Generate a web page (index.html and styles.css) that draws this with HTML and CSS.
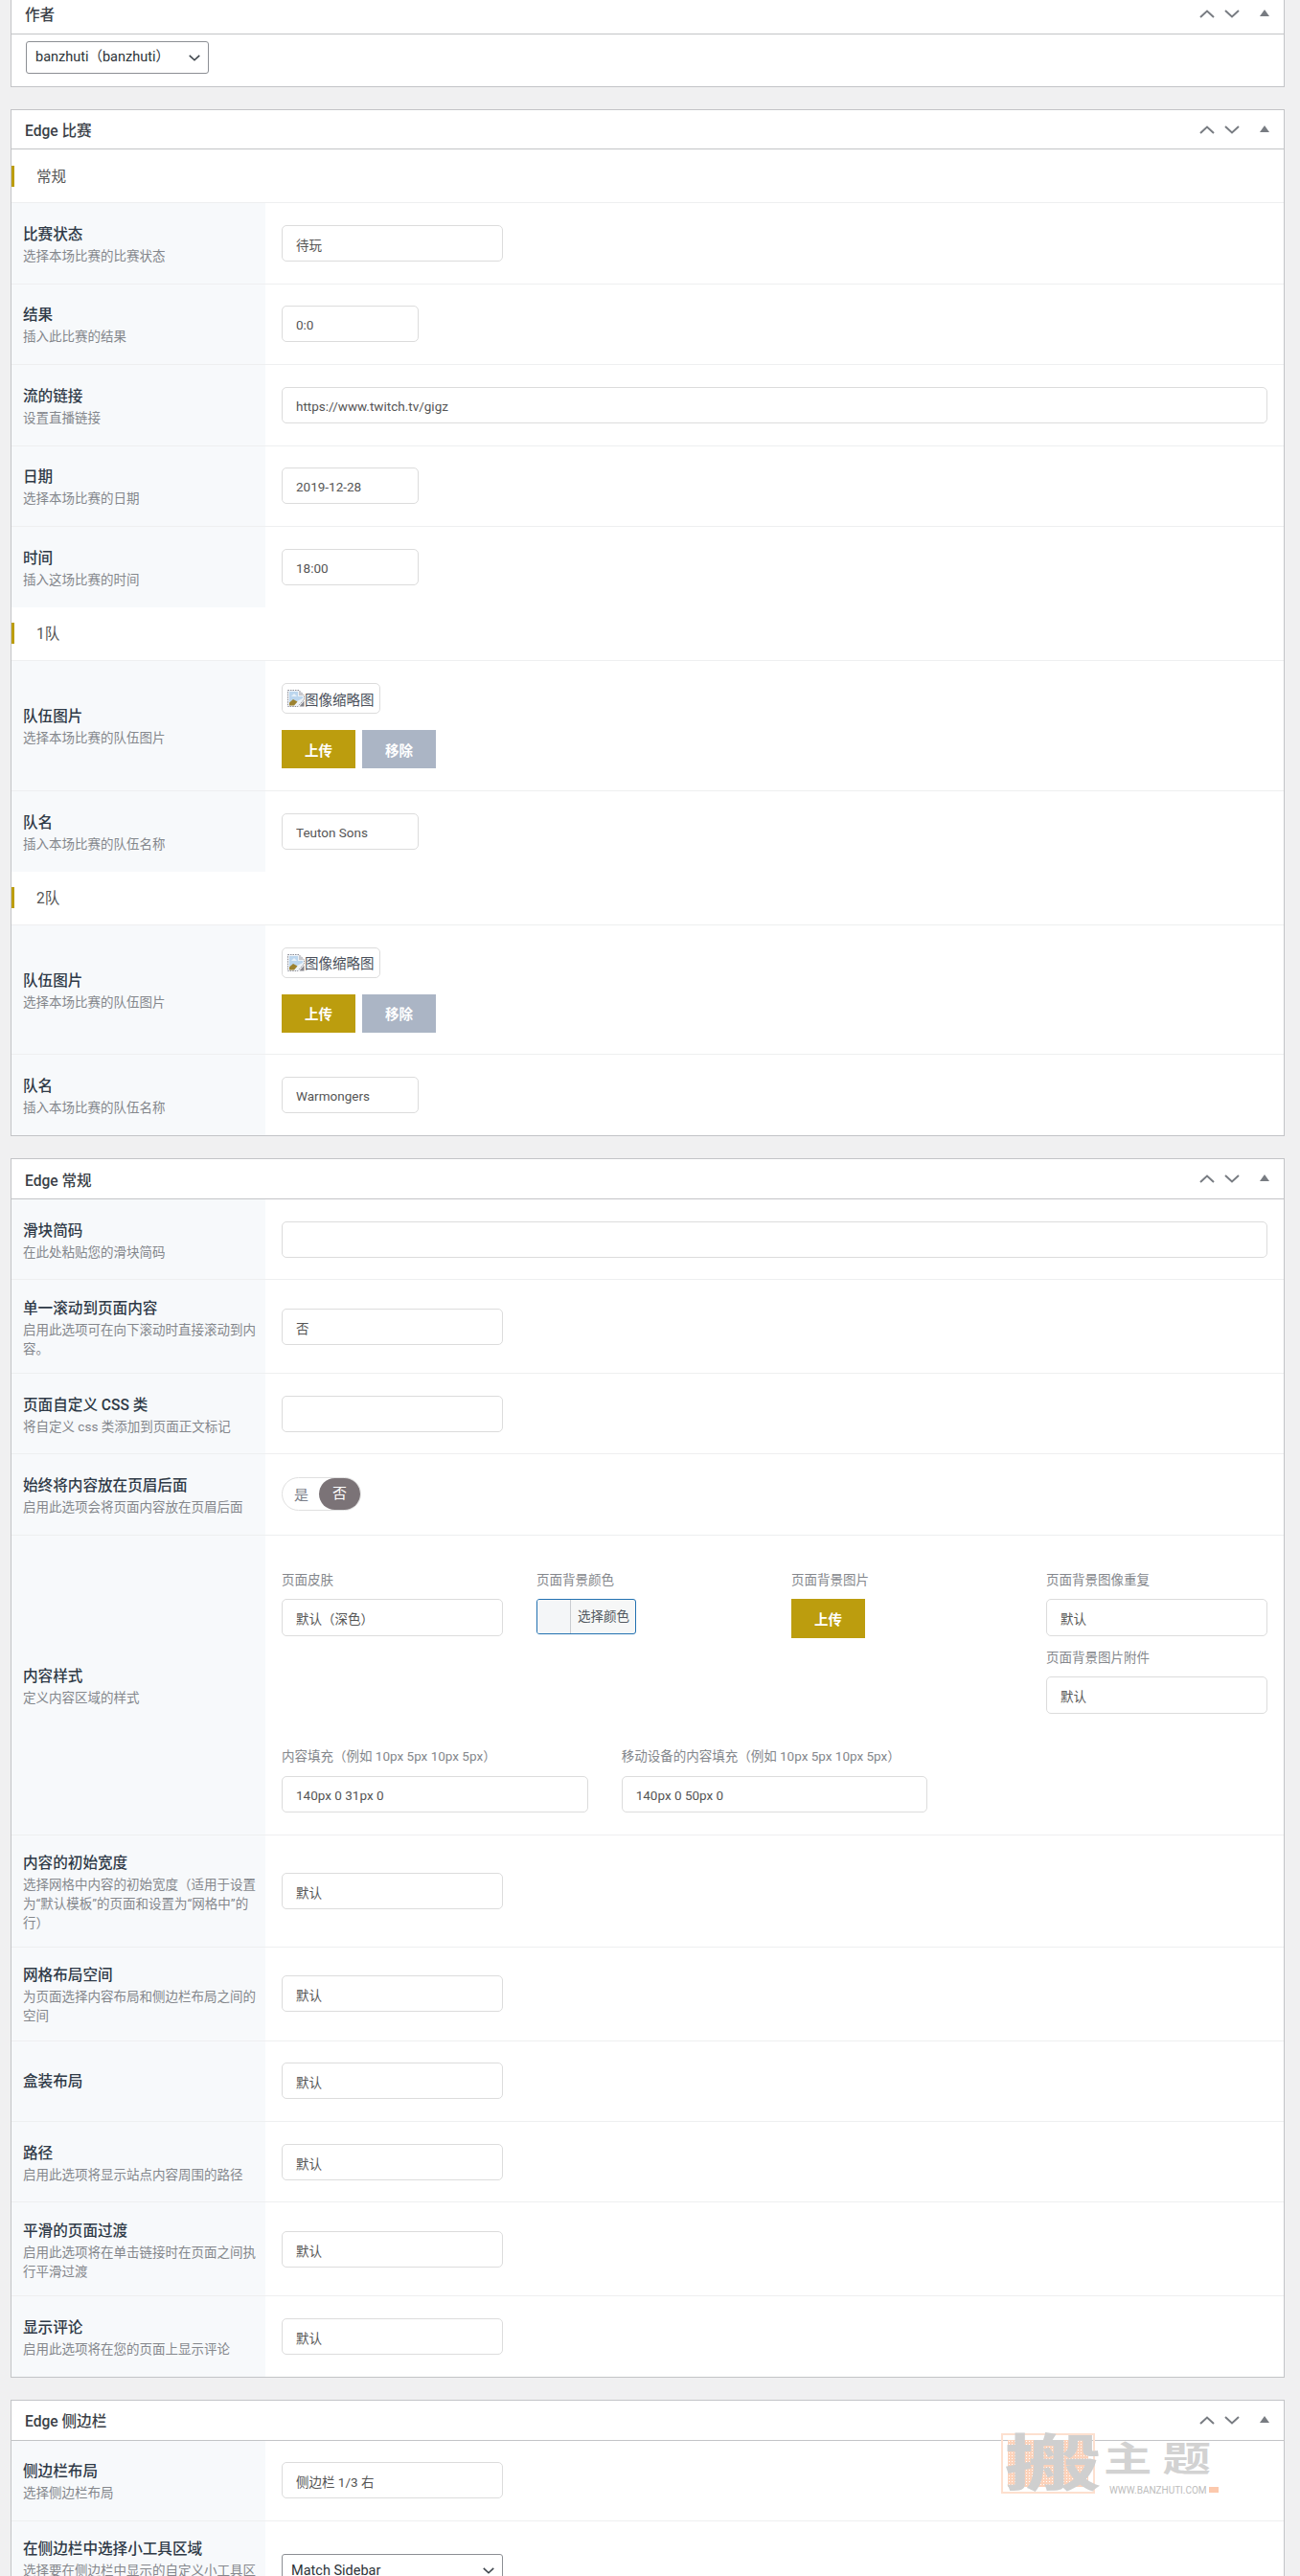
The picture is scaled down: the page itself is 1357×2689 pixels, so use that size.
FILE: index.html
```html
<!DOCTYPE html>
<html lang="zh-CN">
<head>
    <meta charset="UTF-8">
    <meta name="viewport" content="width=device-width, initial-scale=1.0">
    <title>编辑比赛</title>
    <link rel="stylesheet" href="styles.css">
</head>
<body>

<svg class="icon-defs" aria-hidden="true">
    <symbol id="chev-up" viewBox="0 0 16 9"><path d="M1 8 L8 1.5 L15 8" fill="none" stroke="currentColor" stroke-width="2"/></symbol>
    <symbol id="chev-down" viewBox="0 0 16 9"><path d="M1 1 L8 7.5 L15 1" fill="none" stroke="currentColor" stroke-width="2"/></symbol>
    <symbol id="tri-up" viewBox="0 0 10 7"><path d="M5 0 L10 7 L0 7 Z" fill="currentColor"/></symbol>
    <symbol id="broken-img" viewBox="0 0 18 18">
        <path d="M0.5 0.5 H12 L17.5 6 V10 L11 17.5 H0.5 Z" fill="#eef3f8" stroke="#8f8f98" stroke-dasharray="1.5 1"/>
        <path d="M12 0.5 V6 H17.5 Z" fill="#c8c8cc"/>
        <path d="M2 2 H11 V7 H16 V9 L10 12 L2 13 Z" fill="#bcd6ee"/>
        <path d="M4 7 L7 4 L10 7 Z" fill="#e8f1f9"/>
        <path d="M2 16.5 V13.5 L6 10 L10.5 12.5 L7 16.5 Z" fill="#9c8230"/>
        <path d="M12.5 17.5 L17.5 11.5 V17.5 Z" fill="#85858d"/>
    </symbol>
</svg>

<div id="page">

    <div class="postbox first-box">
        <div class="box-head">
            <h2>作者</h2>
            <div class="box-controls">
                <svg class="ctl-chev"><use href="#chev-up"/></svg>
                <svg class="ctl-chev"><use href="#chev-down"/></svg>
                <svg class="ctl-tri"><use href="#tri-up"/></svg>
            </div>
        </div>
        <div class="author-body">
            <div class="select-wrap author-select">
                <select class="wp-select"><option>banzhuti（banzhuti）</option></select>
                <svg class="select-arrow"><use href="#chev-down"/></svg>
            </div>
        </div>
    </div>

    <div class="postbox">
        <div class="box-head">
            <h2>Edge 比赛</h2>
            <div class="box-controls">
                <svg class="ctl-chev"><use href="#chev-up"/></svg>
                <svg class="ctl-chev"><use href="#chev-down"/></svg>
                <svg class="ctl-tri"><use href="#tri-up"/></svg>
            </div>
        </div>

        <div class="section-title"><span>常规</span></div>
        <div class="row">
            <div class="row-label"><h3>比赛状态</h3><p>选择本场比赛的比赛状态</p></div>
            <div class="row-field"><input class="field field-md" value="待玩" readonly></div>
        </div>
        <div class="row">
            <div class="row-label"><h3>结果</h3><p>插入此比赛的结果</p></div>
            <div class="row-field"><input class="field field-sm" value="0:0" readonly></div>
        </div>
        <div class="row">
            <div class="row-label"><h3>流的链接</h3><p>设置直播链接</p></div>
            <div class="row-field"><input class="field" value="https://www.twitch.tv/gigz" readonly></div>
        </div>
        <div class="row">
            <div class="row-label"><h3>日期</h3><p>选择本场比赛的日期</p></div>
            <div class="row-field"><input class="field field-sm" value="2019-12-28" readonly></div>
        </div>
        <div class="row row-last">
            <div class="row-label"><h3>时间</h3><p>插入这场比赛的时间</p></div>
            <div class="row-field"><input class="field field-sm" value="18:00" readonly></div>
        </div>

        <div class="section-title"><span>1队</span></div>
        <div class="row row-image">
            <div class="row-label"><h3>队伍图片</h3><p>选择本场比赛的队伍图片</p></div>
            <div class="row-field field-stack">
                <div class="thumb"><svg class="broken"><use href="#broken-img"/></svg>图像缩略图</div>
                <div class="btn-row">
                    <button class="btn btn-gold">上传</button>
                    <button class="btn btn-grey">移除</button>
                </div>
            </div>
        </div>
        <div class="row row-last">
            <div class="row-label"><h3>队名</h3><p>插入本场比赛的队伍名称</p></div>
            <div class="row-field"><input class="field field-sm" value="Teuton Sons" readonly></div>
        </div>

        <div class="section-title"><span>2队</span></div>
        <div class="row row-image">
            <div class="row-label"><h3>队伍图片</h3><p>选择本场比赛的队伍图片</p></div>
            <div class="row-field field-stack">
                <div class="thumb"><svg class="broken"><use href="#broken-img"/></svg>图像缩略图</div>
                <div class="btn-row">
                    <button class="btn btn-gold">上传</button>
                    <button class="btn btn-grey">移除</button>
                </div>
            </div>
        </div>
        <div class="row row-last">
            <div class="row-label"><h3>队名</h3><p>插入本场比赛的队伍名称</p></div>
            <div class="row-field"><input class="field field-sm" value="Warmongers" readonly></div>
        </div>
    </div>

    <div class="postbox">
        <div class="box-head">
            <h2>Edge 常规</h2>
            <div class="box-controls">
                <svg class="ctl-chev"><use href="#chev-up"/></svg>
                <svg class="ctl-chev"><use href="#chev-down"/></svg>
                <svg class="ctl-tri"><use href="#tri-up"/></svg>
            </div>
        </div>

        <div class="row">
            <div class="row-label"><h3>滑块简码</h3><p>在此处粘贴您的滑块简码</p></div>
            <div class="row-field"><input class="field" readonly></div>
        </div>
        <div class="row">
            <div class="row-label"><h3>单一滚动到页面内容</h3><p>启用此选项可在向下滚动时直接滚动到内容。</p></div>
            <div class="row-field"><input class="field field-md" value="否" readonly></div>
        </div>
        <div class="row">
            <div class="row-label"><h3>页面自定义 CSS 类</h3><p>将自定义 css 类添加到页面正文标记</p></div>
            <div class="row-field"><input class="field field-md" readonly></div>
        </div>
        <div class="row">
            <div class="row-label"><h3>始终将内容放在页眉后面</h3><p>启用此选项会将页面内容放在页眉后面</p></div>
            <div class="row-field">
                <div class="toggle"><span class="toggle-off">是</span><span class="toggle-on">否</span></div>
            </div>
        </div>
        <div class="row">
            <div class="row-label"><h3>内容样式</h3><p>定义内容区域的样式</p></div>
            <div class="row-field style-field">
                <div class="style-grid">
                    <div>
                        <label class="mini-label">页面皮肤</label>
                        <input class="field" value="默认（深色）" readonly>
                    </div>
                    <div>
                        <label class="mini-label">页面背景颜色</label>
                        <div class="color-pick"><span class="color-swatch"></span><span class="color-text">选择颜色</span></div>
                    </div>
                    <div>
                        <label class="mini-label">页面背景图片</label>
                        <button class="btn btn-gold btn-upload">上传</button>
                    </div>
                    <div>
                        <label class="mini-label">页面背景图像重复</label>
                        <input class="field" value="默认" readonly>
                        <label class="mini-label second-label">页面背景图片附件</label>
                        <input class="field" value="默认" readonly>
                    </div>
                </div>
                <div class="padding-grid">
                    <div>
                        <label class="mini-label">内容填充（例如 10px 5px 10px 5px）</label>
                        <input class="field" value="140px 0 31px 0" readonly>
                    </div>
                    <div>
                        <label class="mini-label">移动设备的内容填充（例如 10px 5px 10px 5px）</label>
                        <input class="field" value="140px 0 50px 0" readonly>
                    </div>
                </div>
            </div>
        </div>
        <div class="row">
            <div class="row-label"><h3>内容的初始宽度</h3><p>选择网格中内容的初始宽度（适用于设置为“默认模板”的页面和设置为“网格中”的行）</p></div>
            <div class="row-field"><input class="field field-md" value="默认" readonly></div>
        </div>
        <div class="row">
            <div class="row-label"><h3>网格布局空间</h3><p>为页面选择内容布局和侧边栏布局之间的空间</p></div>
            <div class="row-field"><input class="field field-md" value="默认" readonly></div>
        </div>
        <div class="row">
            <div class="row-label"><h3>盒装布局</h3></div>
            <div class="row-field"><input class="field field-md" value="默认" readonly></div>
        </div>
        <div class="row">
            <div class="row-label"><h3>路径</h3><p>启用此选项将显示站点内容周围的路径</p></div>
            <div class="row-field"><input class="field field-md" value="默认" readonly></div>
        </div>
        <div class="row">
            <div class="row-label"><h3>平滑的页面过渡</h3><p>启用此选项将在单击链接时在页面之间执行平滑过渡</p></div>
            <div class="row-field"><input class="field field-md" value="默认" readonly></div>
        </div>
        <div class="row row-last">
            <div class="row-label"><h3>显示评论</h3><p>启用此选项将在您的页面上显示评论</p></div>
            <div class="row-field"><input class="field field-md" value="默认" readonly></div>
        </div>
    </div>

    <div class="postbox">
        <div class="box-head">
            <h2>Edge 侧边栏</h2>
            <div class="box-controls">
                <svg class="ctl-chev"><use href="#chev-up"/></svg>
                <svg class="ctl-chev"><use href="#chev-down"/></svg>
                <svg class="ctl-tri"><use href="#tri-up"/></svg>
            </div>
        </div>
        <div class="row">
            <div class="row-label"><h3>侧边栏布局</h3><p>选择侧边栏布局</p></div>
            <div class="row-field"><input class="field field-md" value="侧边栏 1/3 右" readonly></div>
        </div>
        <div class="row">
            <div class="row-label"><h3>在侧边栏中选择小工具区域</h3><p>选择要在侧边栏中显示的自定义小工具区域</p></div>
            <div class="row-field">
                <div class="select-wrap sidebar-select">
                    <select class="wp-select"><option>Match Sidebar</option></select>
                    <svg class="select-arrow"><use href="#chev-down"/></svg>
                </div>
            </div>
        </div>
    </div>

    <!-- site watermark, sits on top of the last box -->
    <div class="watermark">
        <div class="wm-stamp"><div class="wm-fill"></div><span class="wm-glyph">搬</span></div>
        <span class="wm-title">主题</span>
        <span class="wm-url">WWW.BANZHUTI.COM</span>
        <span class="wm-dot"></span>
    </div>

</div>

</body>
</html>
```

FILE: styles.css
```css
:root {
    --page-background: #f0f0f1;
    --box-border: #c3c4c7;
    --row-line: #eeeff0;
    --label-background: #f7f9fb;
    --title-text: #2f3a47;
    --desc-text: #84878c;
    --gold: #bc9d0e;
    --grey-button: #abb5c5;
}

* {
    box-sizing: border-box;
}

html, body {
    height: 2689px;
    margin: 0;
    overflow: hidden;
}

body {
    background-color: var(--page-background);
    font-family: Roboto, "Noto Sans CJK SC", sans-serif;
    font-size: 13.5px;
    color: #444;
}

.icon-defs {
    display: none;
}

#page {
    position: relative;
    padding: 0 16px 0 11px;
}

.postbox {
    background-color: #fff;
    border: 1px solid var(--box-border);
    margin-bottom: 23px;
}

.first-box {
    margin-top: -7px;
}

.box-head {
    display: flex;
    align-items: center;
    justify-content: space-between;
    height: 41.7px;
    padding-left: 14px;
    border-bottom: 1px solid var(--box-border);
}

.box-head h2 {
    margin: 0;
    font-size: 15.6px;
    font-weight: 500;
    color: #3a3f47;
}

.box-controls {
    display: flex;
    align-items: center;
    padding-right: 15px;
    color: #787c82;
}

.ctl-chev {
    width: 16px;
    height: 9px;
    margin-right: 10px;
}

.ctl-tri {
    width: 10px;
    height: 7px;
    margin: -2px 0 0 11px;
}

.author-body {
    padding: 7px 15px 13px;
}

.select-wrap {
    position: relative;
    display: block;
}

.author-select {
    width: 191px;
}

.sidebar-select {
    width: 231px;
    margin-top: 6px;
}

.wp-select {
    appearance: none;
    width: 100%;
    height: 34px;
    padding: 0 24px 0 9px;
    background-color: #fff;
    border: 1px solid #8c8f94;
    border-radius: 3px;
    font-family: inherit;
    font-size: 14.5px;
    color: #2c3338;
}

.select-arrow {
    position: absolute;
    right: 9px;
    top: 14px;
    width: 12px;
    height: 7px;
    color: #3c434a;
}

.section-title {
    display: flex;
    align-items: center;
    height: 56px;
    border-bottom: 1px solid var(--row-line);
    font-size: 15.6px;
    color: #555;
}

.section-title span {
    height: 22px;
    line-height: 24px;
    padding-left: 23px;
    border-left: 3px solid var(--gold);
}

.row {
    display: flex;
    min-height: 84.4px;
    border-bottom: 1px solid var(--row-line);
}

.row-last {
    min-height: 84px;
    border-bottom: 0;
}

.row-label {
    flex: 0 0 265px;
    display: flex;
    flex-direction: column;
    justify-content: center;
    padding: 17.25px 10px 15.25px 12px;
    background-color: var(--label-background);
}

.row-label h3 {
    margin: 0;
    font-size: 15.6px;
    font-weight: 500;
    line-height: 24px;
    color: var(--title-text);
}

.row-label p {
    margin: 0;
    font-size: 13.5px;
    line-height: 20px;
    color: var(--desc-text);
}

.row-field {
    flex: 1;
    min-width: 0;
    display: flex;
    align-items: center;
    padding: 0 17px;
}

.field {
    display: block;
    width: 100%;
    height: 38px;
    padding: 2px 14px 0;
    background-color: #fff;
    border: 1px solid #dcdcdc;
    border-radius: 5px;
    font-family: inherit;
    font-size: 13.5px;
    color: #555;
    outline: none;
}

.field-md {
    width: 231px;
}

.field-sm {
    width: 143px;
}

.row-image {
    min-height: 135.7px;
}

.field-stack {
    flex-direction: column;
    align-items: flex-start;
    justify-content: center;
    padding-top: 1px;
}

.thumb {
    display: flex;
    align-items: center;
    width: 103px;
    height: 32px;
    padding: 0 5px;
    margin-bottom: 17px;
    background-color: #fff;
    border: 1px solid #dcdcdc;
    border-radius: 5px;
    font-size: 14.5px;
    white-space: nowrap;
    color: #4a4f5a;
}

.broken {
    flex: none;
    width: 18px;
    height: 18px;
}

.btn-row {
    display: flex;
    gap: 7px;
}

.btn {
    width: 77px;
    height: 40px;
    border: 0;
    font-family: inherit;
    font-size: 14.5px;
    font-weight: 700;
    color: #fff;
}

.btn-gold {
    background-color: var(--gold);
}

.btn-grey {
    background-color: var(--grey-button);
}

.btn-upload {
    display: block;
    height: 41px;
}

.toggle {
    display: flex;
    align-items: center;
    justify-content: space-between;
    width: 83px;
    height: 35px;
    padding-left: 12px;
    border: 1px solid #e0e0e0;
    border-radius: 18px;
    font-size: 15px;
    color: #7b7f8a;
}

.toggle-on {
    width: 43px;
    height: 33px;
    line-height: 33px;
    text-align: center;
    background-color: #7b7377;
    border-radius: 17px;
    color: #fff;
}

.style-field {
    display: block;
    padding: 36px 17px 23px;
}

.style-grid {
    display: grid;
    grid-template-columns: repeat(4, 1fr);
    column-gap: 35px;
}

.style-grid .field {
    height: 39px;
}

.padding-grid {
    display: grid;
    grid-template-columns: repeat(3, 1fr);
    column-gap: 35px;
    margin-top: 34px;
}

.padding-grid .mini-label {
    margin-bottom: 11px;
}

.mini-label {
    display: block;
    height: 20px;
    line-height: 20px;
    margin-bottom: 10px;
    font-size: 13.5px;
    white-space: nowrap;
    color: #84878c;
}

.second-label {
    margin-top: 12px;
}

.color-pick {
    display: flex;
    width: 104px;
    height: 37px;
    background-color: #f6f7f7;
    border: 1px solid #2271b1;
    border-radius: 3px;
    overflow: hidden;
}

.color-swatch {
    width: 35px;
    background-color: #f4f6f8;
    border-right: 1px solid #c9ccd0;
}

.color-text {
    padding-left: 7px;
    line-height: 35px;
    font-size: 13.5px;
    white-space: nowrap;
    color: #50575e;
}

.watermark {
    position: absolute;
    left: 1045px;
    top: 2547px;
    width: 230px;
    height: 68px;
    pointer-events: none;
}

.wm-stamp {
    position: absolute;
    left: 0;
    top: 0;
    width: 98px;
    height: 63px;
    padding: 5px;
    border: 2px solid #fde0cf;
}

.wm-fill {
    height: 100%;
    background-color: #fcd2ba;
    background-image: radial-gradient(#fff 0.6px, transparent 0.8px);
    background-size: 3px 3px;
}

.wm-glyph {
    position: absolute;
    left: 1px;
    top: -17px;
    font-size: 64px;
    font-weight: 700;
    line-height: 96px;
    color: #cfcfcf;
    transform: scaleX(1.6);
    transform-origin: left center;
}

.wm-title {
    position: absolute;
    left: 107px;
    top: 2px;
    font-size: 36px;
    font-weight: 700;
    line-height: 52px;
    letter-spacing: 8px;
    color: #d2d2d2;
    transform: scaleX(1.4);
    transform-origin: left center;
}

.wm-url {
    position: absolute;
    left: 113px;
    top: 53px;
    font-size: 10px;
    line-height: 14px;
    white-space: nowrap;
    color: #bdbdbd;
}

.wm-dot {
    position: absolute;
    left: 217px;
    top: 56px;
    width: 10px;
    height: 6px;
    background-color: #fcc9ad;
}
```
